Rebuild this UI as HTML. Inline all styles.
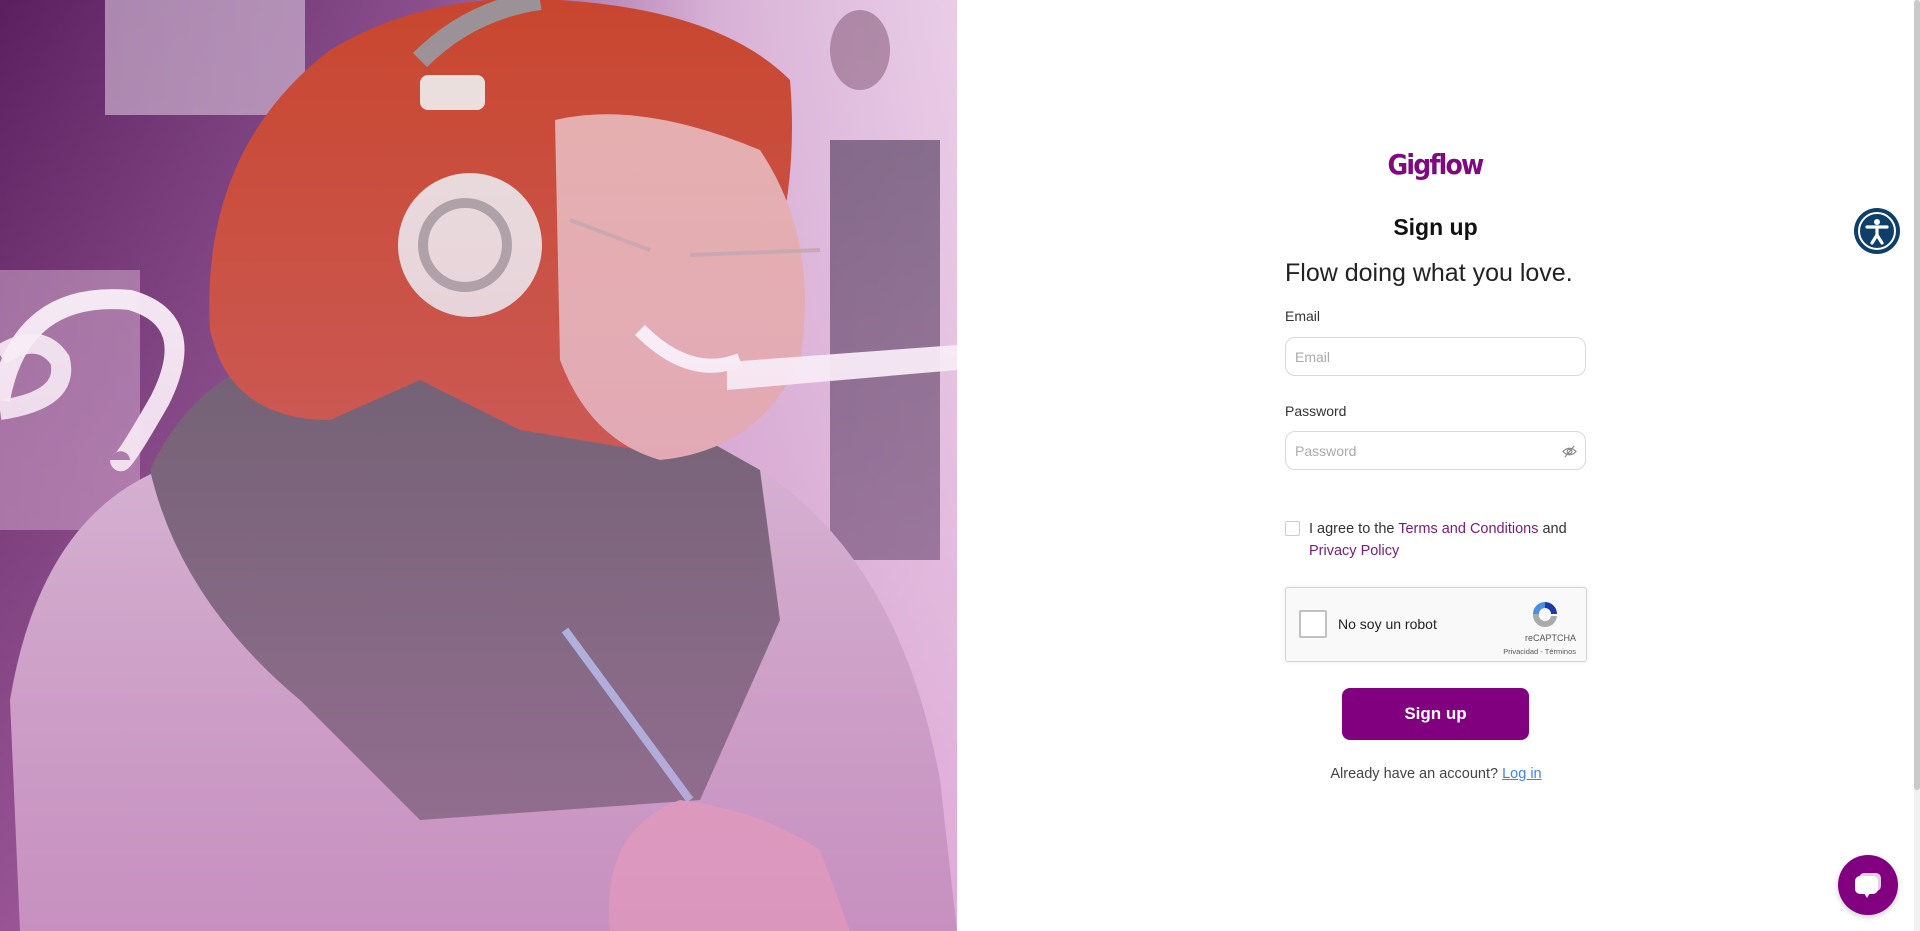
<!DOCTYPE html>
<html><head><meta charset="utf-8"><style>
*{box-sizing:border-box;margin:0;padding:0}
body{width:1920px;height:931px;overflow:hidden;background:#fff;font-family:"Liberation Sans",sans-serif;position:relative}
.left{position:absolute;left:0;top:0;width:957px;height:931px;overflow:hidden}
.abs{position:absolute}
label.l{position:absolute;left:1285px;font-size:14px;color:#333}
.inp{position:absolute;left:1285px;width:301px;height:39px;border:1px solid #d9d9d9;border-radius:10px;font-size:14px;color:#aaa;padding:11px 9px}
</style></head><body>
<div class="left">
<svg width="957" height="931" viewBox="0 0 957 931">
<defs>
<linearGradient id="bg" x1="0" x2="1" y1="0" y2="0"><stop offset="0" stop-color="#5b1f60"/><stop offset="0.45" stop-color="#8a4f8c"/><stop offset="0.75" stop-color="#d8b2d6"/><stop offset="1" stop-color="#e9cde7"/></linearGradient>
<linearGradient id="sw" x1="0" x2="0" y1="0" y2="1"><stop offset="0" stop-color="#d6bcd4"/><stop offset="1" stop-color="#bb98b8"/></linearGradient>
<linearGradient id="bot" x1="0" x2="0" y1="0" y2="1"><stop offset="0" stop-color="#d9a0d0" stop-opacity="0"/><stop offset="1" stop-color="#d488c8" stop-opacity=".5"/></linearGradient>
</defs>
<rect width="957" height="931" fill="url(#bg)"/>
<rect x="105" y="0" width="200" height="115" fill="#d9c6dc" opacity=".6"/>
<rect x="0" y="270" width="140" height="260" fill="#d7b7d4" opacity=".5"/>
<rect x="830" y="140" width="110" height="420" fill="#3c2a4a" opacity=".6"/>
<ellipse cx="860" cy="50" rx="30" ry="40" fill="#7a4f6c" opacity=".5"/>
<path d="M20 931 L10 700 Q40 520 160 470 L300 440 L520 520 L760 470 Q900 560 940 780 L957 931 Z" fill="url(#sw)"/>
<path d="M150 470 Q200 360 330 340 L600 380 L760 470 L780 620 L700 800 L420 820 L300 700 Q180 600 150 470 Z" fill="#5c5560"/>
<path d="M210 330 Q200 150 330 50 Q430 -10 560 0 Q720 10 790 80 Q800 200 760 300 L720 400 L640 450 L520 430 L420 380 L330 420 Q230 420 210 330 Z" fill="#c8462f"/>
<path d="M555 120 Q640 100 760 150 Q820 240 800 360 Q760 450 660 460 Q590 440 560 360 Z" fill="#e6b0ae"/>
<path d="M640 330 Q690 380 740 360" stroke="#fff" stroke-width="14" fill="none"/>
<path d="M420 60 Q470 10 540 0" stroke="#9a9296" stroke-width="20" fill="none"/>
<circle cx="470" cy="245" r="72" fill="#eae0dd"/>
<circle cx="465" cy="245" r="42" fill="none" stroke="#a9a2a2" stroke-width="10"/>
<rect x="420" y="75" width="65" height="35" rx="8" fill="#ece2de"/>
<path d="M570 220 L650 250 M690 255 L820 250" stroke="#c8aaae" stroke-width="4" fill="none"/>
<path d="M565 630 L690 800" stroke="#9cc1e6" stroke-width="8"/>
<path d="M610 931 Q600 830 680 800 Q760 810 820 850 L850 931 Z" fill="#e2a4b4"/>
<path d="M0 400 Q20 290 130 300 Q200 320 160 400 Q120 470 120 460" stroke="#fff" stroke-width="20" fill="none" opacity=".95"/>
<path d="M0 355 Q40 330 60 360 Q70 400 0 410" stroke="#fff" stroke-width="20" fill="none" opacity=".9"/>
<path d="M727 362 L957 345 L957 370 L727 390 Z" fill="#fff" opacity=".95"/>
<rect width="957" height="931" fill="url(#bot)"/>
</svg>
</div>

<div class="abs" style="left:1373px;top:148px;width:124px;text-align:center;font-family:'DejaVu Sans',sans-serif;font-weight:bold;font-size:28px;color:#7f0a7f;letter-spacing:-2px;transform:scaleX(.9)">Gigflow</div>
<div class="abs" style="left:1285px;top:214px;width:301px;text-align:center;font-size:23px;font-weight:bold;color:#111">Sign up</div>
<div class="abs" style="left:1285px;top:259px;font-size:25px;color:#222">Flow doing what you love.</div>
<label class="l" style="top:308px">Email</label>
<div class="inp" style="top:337px">Email</div>
<label class="l" style="top:403px">Password</label>
<div class="inp" style="top:431px">Password
<svg class="abs" style="right:8px;top:12px" width="15" height="15" viewBox="0 0 16 16"><path d="M1 8 Q8 1 15 8 Q8 15 1 8 Z" fill="none" stroke="#888" stroke-width="1.2"/><circle cx="8" cy="8" r="2.5" fill="none" stroke="#888" stroke-width="1.2"/><path d="M3 14 L13 2" stroke="#888" stroke-width="1.2"/></svg></div>
<div class="abs" style="left:1285px;top:521px;width:15px;height:15px;border:1px solid #ccc;border-radius:2px"></div>
<div class="abs" style="left:1309px;top:518px;font-size:14.5px;line-height:22px;color:#333">I agree to the <span style="color:#7a1a7a">Terms and Conditions</span> and<br><span style="color:#7a1a7a">Privacy Policy</span></div>
<div class="abs" style="left:1285px;top:587px;width:302px;height:75px;background:#f9f9f9;border:1px solid #d3d3d3;border-radius:3px;box-shadow:0 0 4px rgba(0,0,0,.08)">
 <div class="abs" style="left:13px;top:22px;width:28px;height:28px;border:2px solid #c1c1c1;border-radius:2px;background:#fff"></div>
 <div class="abs" style="left:52px;top:28px;font-size:14px;color:#222">No soy un robot</div>
 <svg class="abs" style="left:243px;top:10px" width="32" height="32" viewBox="0 0 32 32"><path d="M16 4 A12 12 0 0 1 28 16 L22 16 A6 6 0 0 0 16 10 Z" fill="#1c3aa9"/><path d="M4 16 A12 12 0 0 1 16 4 L16 10 A6 6 0 0 0 10 16 Z" fill="#4a90e2"/><path d="M4 16 L10 16 A6 6 0 0 0 22 18 L28 18 A12 12 0 0 1 4 16 Z" fill="#aaa"/></svg>
 <div class="abs" style="right:10px;top:45px;font-size:9px;color:#555">reCAPTCHA</div>
 <div class="abs" style="right:10px;top:59px;font-size:7.5px;color:#555">Privacidad - Términos</div>
</div>
<div class="abs" style="left:1342px;top:688px;width:187px;height:52px;background:#800080;border-radius:8px;color:#fff;font-weight:bold;font-size:17px;text-align:center;line-height:52px">Sign up</div>
<div class="abs" style="left:1285px;top:766px;width:302px;text-align:center;font-size:14.5px;color:#444">Already have an account? <span style="color:#3b82f6;text-decoration:underline">Log in</span></div>

<div class="abs" style="left:1854px;top:208px;width:46px;height:46px;border-radius:50%;background:#0e3f6b">
<svg width="46" height="46" viewBox="0 0 46 46"><circle cx="23" cy="23" r="18" fill="none" stroke="#fff" stroke-width="2"/><circle cx="23" cy="14" r="3" fill="#fff"/><path d="M13 19 L33 19 M23 19 L23 27 M23 27 L18 35 M23 27 L28 35" stroke="#fff" stroke-width="3.2" stroke-linecap="round" fill="none"/></svg></div>
<div class="abs" style="left:1914px;top:0;width:6px;height:931px;background:#f1f1f1"></div>
<div class="abs" style="left:1914px;top:0;width:6px;height:790px;background:#c9c9c9;border-radius:3px"></div>
<div class="abs" style="left:1838px;top:855px;width:60px;height:60px;border-radius:50%;background:#800080;box-shadow:0 2px 6px rgba(0,0,0,.2)">
<svg width="60" height="60" viewBox="0 0 60 60"><rect x="21" y="18" width="22" height="18" rx="5" fill="#fff" opacity=".8"/><rect x="17" y="21" width="23" height="18" rx="5" fill="#fff"/><path d="M26 38 L29 43 L32 38 Z" fill="#fff"/></svg></div>
</body></html>
